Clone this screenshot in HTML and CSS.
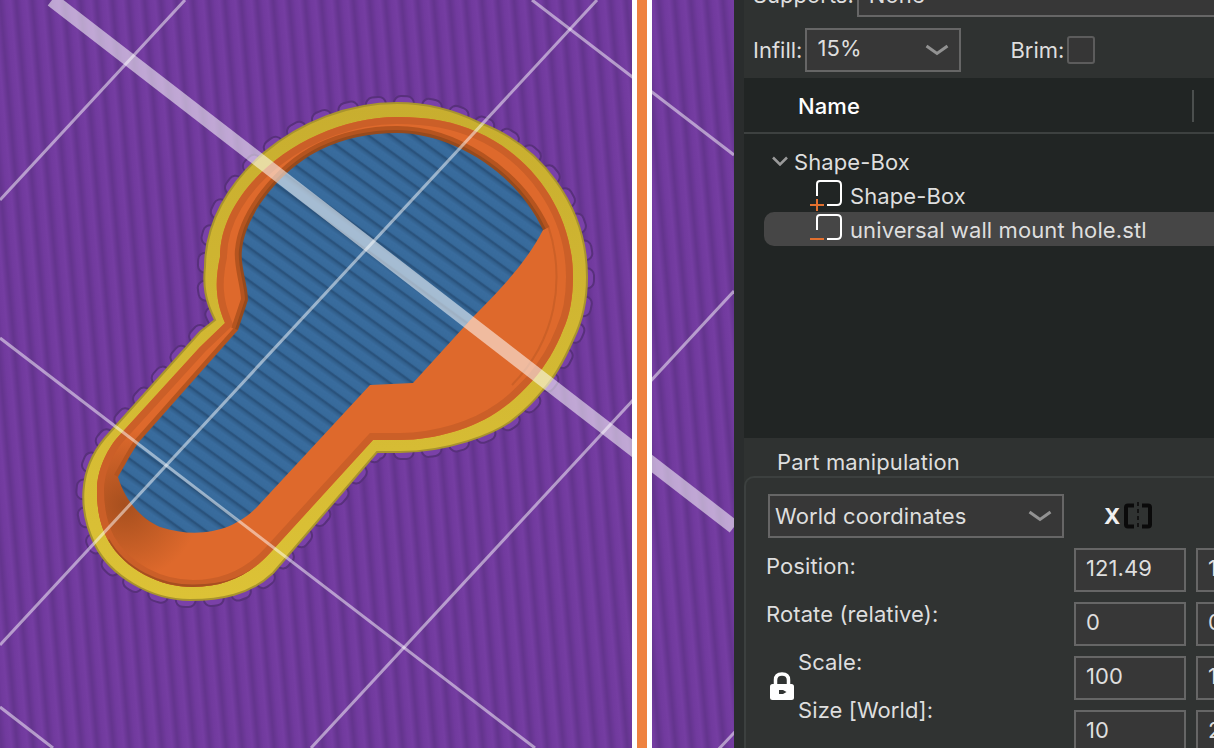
FILE: index.html
```html
<!DOCTYPE html>
<html lang="en">
<head>
<meta charset="utf-8">
<title>Slicer preview</title>
<link rel="stylesheet" href="styles.css">
</head>
<body>
<div class="app">
  <main class="viewport">
    <svg class="scene" width="734" height="748" viewBox="0 0 734 748" xmlns="http://www.w3.org/2000/svg">
      <defs>
        <linearGradient id="purpleStripe" x1="0" x2="1" y1="0" y2="0">
          <stop offset="0" stop-color="#63348d"/>
          <stop offset=".35" stop-color="#713a9e"/>
          <stop offset=".65" stop-color="#753da2"/>
          <stop offset="1" stop-color="#63348d"/>
        </linearGradient>
        <pattern id="purple" width="16" height="40" patternUnits="userSpaceOnUse" patternTransform="rotate(-5)">
          <rect width="16" height="40" fill="url(#purpleStripe)"/>
        </pattern>
        <linearGradient id="blueStripe" x1="0" x2="0" y1="0" y2="1">
          <stop offset="0" stop-color="#264c74"/>
          <stop offset=".14" stop-color="#315f8c"/>
          <stop offset=".4" stop-color="#396c9e"/>
          <stop offset=".88" stop-color="#376a9b"/>
          <stop offset="1" stop-color="#264c74"/>
        </linearGradient>
        <pattern id="blue" width="40" height="13.400" patternUnits="userSpaceOnUse" patternTransform="rotate(36)">
          <rect width="40" height="13.400" fill="url(#blueStripe)"/>
        </pattern>
        <radialGradient id="shade" gradientUnits="userSpaceOnUse" cx="125" cy="505" r="75">
          <stop offset="0" stop-color="#8f4418" stop-opacity=".7"/>
          <stop offset="1" stop-color="#8f4418" stop-opacity="0"/>
        </radialGradient>
        <linearGradient id="gold" x1="0" x2="0" y1="0" y2="1">
          <stop offset="0" stop-color="#c8ae2f"/>
          <stop offset="1" stop-color="#dcc236"/>
        </linearGradient>
        <path id="outerShape" d="M215 320 C205 300 203 285 205 267 C205 180 300 103 397 103 C430 103 458 112 480 123 C540 145 587 205 587 277 C587 300 582 322 573 340 C565 358 556 376 543 390 C535 400 525 410 515 418 C495 435 445 452 400 452 L377 452 L273 573 C250 595 220 600 190 600 C150 600 110 575 95 545 C78 510 78 470 105 438 L200 332 Z"/>
        <path id="orangeShape" d="M225 323 C215 300 215 280 220 257 C220 185 310 117 397 117 C430 117 455 122 477 132 C530 155 573 210 573 277 C573 297 570 315 563 330 C556 348 546 365 533 380 C522 392 512 402 500 410 C475 428 435 440 400 440 L373 440 L270 553 C250 575 225 587 193 587 C160 587 125 570 108 540 C100 525 97 510 97 490 C97 470 107 450 117 438 L200 347 Z"/>
        <clipPath id="orangeClip"><use href="#orangeShape"/></clipPath>
      </defs>

      <rect width="734" height="748" fill="url(#purple)"/>

      <use class="scallop-dark" href="#outerShape"/>
      <use class="scallop-light" href="#outerShape"/>
      <use class="gold" href="#outerShape"/>
      <use class="orange" href="#orangeShape"/>
      <g clip-path="url(#orangeClip)">
        <rect x="40" y="430" width="180" height="160" fill="url(#shade)"/>
        <use class="ring" href="#orangeShape"/>
        <path class="rim-soft" d="M548 225 C566 280 556 340 512 385"/>
        <path class="rim-edge" d="M273 553 C250 578 225 586 193 586 C160 586 125 570 108 540"/>
      </g>
      <path class="rim-outer" d="M238 330 L248 300 C248 285 240 265 242 250 C245 215 280 170 320 150 C345 138 370 133 397 133 C450 133 515 170 543 230"/>
      <path class="rim-outer rim-neck" d="M238 330 L138 443 C130 455 125 465 118 477"/>
      <path class="rim-inner" d="M238 330 L248 300 C248 285 240 265 242 250 C245 215 280 170 320 150 C345 138 370 133 397 133 C450 133 515 170 543 230"/>
      <path class="blue" d="M397 133 C450 133 515 170 543 230 C525 265 495 295 473 317 L413 383 L370 385 L257 507 C235 530 200 540 160 527 C140 518 125 500 118 477 C125 465 130 455 138 443 L238 330 L248 300 C248 285 240 265 242 250 C245 215 280 170 320 150 C345 138 370 133 397 133 Z"/>

      <line class="grid" x1="185" y1="0" x2="0" y2="200"/>
      <line class="grid" x1="597" y1="0" x2="0" y2="645"/>
      <line class="grid" x1="734" y1="291" x2="311" y2="748"/>
      <line class="grid" x1="748" y1="718" x2="716" y2="752"/>
      <line class="grid" x1="532" y1="0" x2="734" y2="155"/>
      <line class="grid" x1="0" y1="338" x2="535" y2="748"/>
      <line class="grid" x1="0" y1="707" x2="53" y2="748"/>
      <line class="grid grid-major" x1="52" y1="0" x2="734" y2="527"/>
    </svg>
    <div class="divider"></div>
  </main>

  <aside class="sidebar">
    <div class="sidebar-body">
      <div class="field-row field-row-top">
        <span class="label">Supports:</span>
        <div class="select select-wide"><span>None</span></div>
      </div>
      <div class="field-row">
        <span class="label">Infill:</span>
        <div class="select select-infill">
          <span class="select-raised">15%</span>
          <svg class="chevron" width="24" height="12" viewBox="0 0 24 12"><path d="M1.500 2 L12 9.500 L22.500 2"/></svg>
        </div>
        <span class="label label-brim">Brim:</span>
        <div class="checkbox"></div>
      </div>

      <section class="outline">
        <header class="outline-head">
          <span class="outline-title">Name</span>
          <span class="outline-sep"></span>
        </header>
        <ul class="tree">
          <li class="tree-row tree-root">
            <svg class="tree-arrow" width="16" height="10" viewBox="0 0 16 10"><path d="M1 1.500 L8 8.500 L15 1.500"/></svg>
            <span class="tree-text">Shape-Box</span>
          </li>
          <li class="tree-row tree-child">
            <svg class="part-icon" width="34" height="34" viewBox="0 0 34 34">
              <path class="part-box" d="M7 18 V6 Q7 3 10 3 H27 Q31 3 31 7 V23 Q31 27 27 27 H17"/>
              <path class="part-mark" d="M0 27 H14 M7 21 V33"/>
            </svg>
            <span class="tree-text">Shape-Box</span>
          </li>
          <li class="tree-row tree-child tree-selected">
            <svg class="part-icon" width="34" height="34" viewBox="0 0 34 34">
              <path class="part-box" d="M7 18 V6 Q7 3 10 3 H27 Q31 3 31 7 V23 Q31 27 27 27 H17"/>
              <path class="part-mark" d="M0 27 H14"/>
            </svg>
            <span class="tree-text">universal wall mount hole.stl</span>
          </li>
        </ul>
      </section>

      <h2 class="group-title">Part manipulation</h2>
      <section class="group">
        <div class="coord-row">
          <div class="select select-coords">
            <span>World coordinates</span>
            <svg class="chevron" width="24" height="12" viewBox="0 0 24 12"><path d="M1.500 2 L12 9.500 L22.500 2"/></svg>
          </div>
          <span class="axis-x">X</span>
          <svg class="mirror-icon" width="28" height="28" viewBox="0 0 28 28">
            <path class="mirror-bracket" d="M10 3.500 H4 Q2 3.500 2 5.500 V22.500 Q2 24.500 4 24.500 H10 M18 3.500 H24 Q26 3.500 26 5.500 V22.500 Q26 24.500 24 24.500 H18"/>
            <path class="mirror-axis" d="M14 0 V28"/>
          </svg>
        </div>
        <div class="form">
          <div class="form-labels">
            <div class="form-label">Position:</div>
            <div class="form-label">Rotate (relative):</div>
            <div class="scale-block">
              <svg class="lock" width="24" height="28" viewBox="0 0 24 28">
                <path class="lock-shackle" d="M5.500 13 V8 C5.500 3.500 8 2 12 2 C16 2 18.500 3.500 18.500 8 V13"/>
                <path class="lock-body" d="M2.500 12 H21.500 Q24 12 24 14.500 V25.500 Q24 28 21.500 28 H2.500 Q0 28 0 25.500 V14.500 Q0 12 2.500 12 Z"/>
                <path class="lock-key" d="M9 18 H13 L16.500 20 L13 22 H9 Z"/>
              </svg>
              <div class="scale-labels">
                <div class="form-label">Scale:</div>
                <div class="form-label">Size [World]:</div>
              </div>
            </div>
          </div>
          <div class="form-values">
            <div class="value-row"><div class="num">121.49</div><div class="num">1</div></div>
            <div class="value-row"><div class="num">0</div><div class="num">0</div></div>
            <div class="value-row"><div class="num">100</div><div class="num">1</div></div>
            <div class="value-row"><div class="num">10</div><div class="num">2</div></div>
          </div>
        </div>
      </section>
    </div>
  </aside>
</div>
</body>
</html>
```
FILE: styles.css
```css
* { box-sizing: border-box; }

html, body {
  margin: 0;
  height: 100%;
  overflow: hidden;
  background: #2a2d2d;
}

body {
  font-family: Inter, "Noto Sans", sans-serif;
  font-size: 22px;
  letter-spacing: .1px;
  color: #dedede;
}

.app {
  display: flex;
  width: 1214px;
  height: 748px;
  overflow: hidden;
}

/* 3D view */
.viewport {
  position: relative;
  flex: 0 0 734px;
  height: 748px;
}

.scene { display: block; }

.divider {
  position: absolute;
  top: 0;
  bottom: 0;
  left: 632px;
  width: 20px;
  background: #ee8240;
  border-left: 5.500px solid #fff;
  border-right: 5.500px solid #fff;
}

.gold { fill: url(#gold); stroke: #a8932e; stroke-width: 2; }
.orange { fill: #de692c; }
.ring { fill: none; stroke: #cb5f28; stroke-width: 14; }
.rim-outer { fill: none; stroke: #b5541f; stroke-width: 14; }
.rim-neck { stroke-width: 9; }
.rim-inner { fill: none; stroke: #964a1d; stroke-width: 6; }
.rim-soft { fill: none; stroke: #c05a25; stroke-width: 2; stroke-opacity: .6; }
.rim-edge { fill: none; stroke: #a64f20; stroke-width: 3; }
.blue { fill: url(#blue); }

.scallop-dark,
.scallop-light {
  fill: none;
  stroke-linecap: round;
  stroke-dasharray: 6 22;
}
.scallop-dark { stroke: #58307c; stroke-width: 16; }
.scallop-light { stroke: #7a41a8; stroke-width: 12; }

.grid {
  stroke: #fff;
  stroke-opacity: .5;
  stroke-width: 3;
}
.grid-major {
  stroke-opacity: .55;
  stroke-width: 14;
}

/* Sidebar */
.sidebar {
  flex: 0 0 480px;
  height: 748px;
  overflow: hidden;
  background: #2a2d2d;
}

.sidebar-body {
  margin-left: 10px;
  height: 748px;
  background: #2f3231;
}

.field-row {
  display: flex;
  align-items: center;
  gap: 3px;
  height: 44px;
  padding-left: 9px;
  margin-bottom: 6px;
  white-space: nowrap;
}

.field-row-top {
  margin-top: -27px;
  margin-bottom: 11px;
}

.label {
  color: #dedede;
  letter-spacing: 0;
}
.label-brim { margin-left: 46px; }

.select {
  display: flex;
  align-items: center;
  justify-content: space-between;
  height: 44px;
  border: 2px solid #666;
  background: #373737;
  padding: 0 10px;
  color: #dedede;
}

.select-wide { flex: 0 0 420px; }
.select-infill { width: 156px; }
.select-raised { position: relative; top: -2px; }
.select-coords {
  width: 296px;
  padding-left: 5px;
}

.chevron { fill: none; stroke: #929292; stroke-width: 3; }

.checkbox {
  width: 28px;
  height: 28px;
  border: 2px solid #5c5c5c;
  border-radius: 3px;
  background: #363636;
}

/* Object list */
.outline {
  height: 360px;
  background: #212524;
}

.outline-head {
  display: flex;
  align-items: center;
  height: 56px;
  padding: 1px 0 0 54px;
  border-bottom: 2px solid #3d4140;
}

.outline-title {
  flex: 0 0 394px;
  font-weight: 500;
  color: #fff;
}

.outline-sep {
  width: 2px;
  height: 32px;
  background: #4b4f4e;
}

.tree {
  list-style: none;
  margin: 0;
  padding: 10px 0 0 20px;
}

.tree-row {
  display: flex;
  align-items: center;
  height: 34px;
  white-space: nowrap;
  color: #dedede;
}

.tree-text { padding-top: 2px; }

.tree-root { padding-left: 8px; gap: 6px; }
.tree-child { padding-left: 46px; gap: 6px; }

.tree-selected {
  background: #464646;
  border-radius: 10px 0 0 10px;
}

.tree-arrow { fill: none; stroke: #9a9a9a; stroke-width: 2.500; }

.part-icon { flex: none; }
.part-box { fill: none; stroke: #fff; stroke-width: 2; }
.part-mark { fill: none; stroke: #e3702f; stroke-width: 2; }

/* Part manipulation */
.group-title {
  height: 38px;
  margin: 0;
  padding: 12px 0 0 33px;
  font-size: 22px;
  font-weight: 400;
  line-height: 24px;
  color: #dedede;
}

.group {
  height: 320px;
  padding: 16px 0 0 20px;
  border: 2px solid #3c403f;
  border-right: 0;
  border-bottom: 0;
  border-radius: 10px 0 0 0;
  background: #303332;
}

.coord-row {
  display: flex;
  align-items: center;
  height: 44px;
  padding-left: 2px;
}

.axis-x {
  margin-left: 40px;
  width: 20px;
  font-weight: 700;
  color: #f0f0f0;
}

.mirror-icon { flex: none; }
.mirror-bracket { fill: none; stroke: #0a0a0a; stroke-width: 4; }
.mirror-axis { stroke: #0a0a0a; stroke-width: 1.500; stroke-dasharray: 4 3; }

.form {
  display: flex;
  margin-top: 4px;
}

.form-labels { flex: 0 0 308px; }

.form-label {
  display: flex;
  align-items: center;
  height: 48px;
  white-space: nowrap;
  color: #dedede;
}

.scale-block {
  display: flex;
  align-items: center;
  padding-left: 4px;
  gap: 4px;
}

.lock { flex: none; }
.lock-shackle { fill: none; stroke: #fff; stroke-width: 3.500; }
.lock-body { fill: #fff; }
.lock-key { fill: #303332; }

.form-values {
  padding-top: 6px;
}

.value-row {
  display: flex;
  gap: 10px;
  height: 54px;
}

.num {
  display: flex;
  align-items: center;
  flex: 0 0 112px;
  height: 44px;
  padding: 0 0 4px 10px;
  border: 2px solid #666;
  background: #373737;
  color: #dedede;
}
```
